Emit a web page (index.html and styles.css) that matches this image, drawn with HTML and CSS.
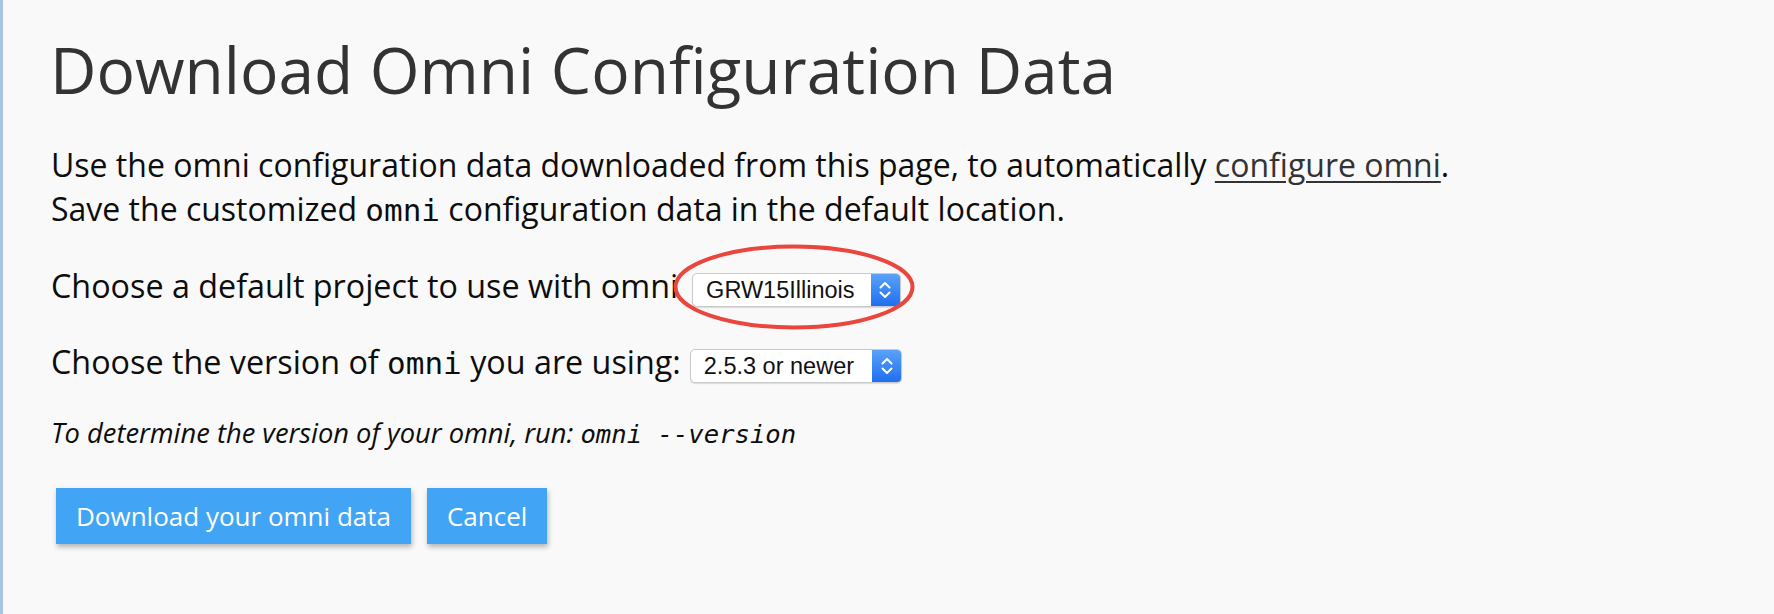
FILE: index.html
```html
<!DOCTYPE html>
<html lang="en">
<head>
<meta charset="utf-8">
<title>Download Omni Configuration Data</title>
<link rel="stylesheet" href="styles.css">
</head>
<body>
<div class="page">
  <main class="content">
    <h1 class="title">Download Omni Configuration Data</h1>
    <p class="intro">Use the omni configuration data downloaded from this page, to automatically <a class="link" href="#">configure omni</a>.<br>Save the customized <code class="code">omni</code> configuration data in the default location.</p>

    <div class="field field-project">
      <span class="label">Choose a default project to use with omni</span>
      <span class="select-wrap">
        <span class="select select-project">
          <span class="select-value">GRW15Illinois</span>
          <span class="select-cap">
            <svg class="chevrons" viewBox="0 0 14 22" width="14" height="22"><path d="M2.5 8.5 L7 4 L11.5 8.5 M2.5 13.5 L7 18 L11.5 13.5" fill="none" stroke="#fff" stroke-width="2" stroke-linecap="round" stroke-linejoin="round"/></svg>
          </span>
        </span>
        <svg class="highlight" viewBox="0 0 242 86" width="242" height="86"><ellipse cx="121" cy="43" rx="118.5" ry="40.5" fill="none" stroke="#e9463d" stroke-width="4"/></svg>
      </span>
    </div>

    <div class="field field-version">
      <span class="label">Choose the version of <code class="code">omni</code> you are using:</span>
      <span class="select select-version">
        <span class="select-value">2.5.3 or newer</span>
        <span class="select-cap">
          <svg class="chevrons" viewBox="0 0 14 22" width="14" height="22"><path d="M2.5 8.5 L7 4 L11.5 8.5 M2.5 13.5 L7 18 L11.5 13.5" fill="none" stroke="#fff" stroke-width="2" stroke-linecap="round" stroke-linejoin="round"/></svg>
        </span>
      </span>
    </div>

    <p class="hint">To determine the version of your omni, run: <code class="code code-hint">omni --version</code></p>

    <div class="actions">
      <button class="btn" type="button">Download your omni data</button>
      <button class="btn" type="button">Cancel</button>
    </div>
  </main>
</div>
</body>
</html>
```
FILE: styles.css
```css
html, body {
  margin: 0;
  padding: 0;
  background: #f9f9f9;
}

.page {
  min-height: 614px;
  border-left: 3px solid #a7c4e2;
  box-sizing: border-box;
}

.content {
  padding: 30px 0 0 48px;
  font-family: "Open Sans", "Liberation Sans", sans-serif;
  color: #0d0d0d;
}

.title {
  margin: 0 0 0 -1px;
  font-size: 64px;
  line-height: 80px;
  font-weight: 400;
  color: #333;
}

.intro {
  margin: 33px 0 0 0;
  font-size: 32px;
  line-height: 44px;
}

.link {
  color: #333;
  text-decoration: underline;
  text-underline-offset: 4px;
  text-decoration-thickness: 2px;
}

.code {
  font-family: "DejaVu Sans Mono", "Liberation Mono", monospace;
  font-size: 31px;
}

.field {
  display: flex;
  align-items: baseline;
  gap: 14px;
  font-size: 32.3px;
  line-height: 44px;
}

.field-project {
  margin-top: 31px;
}

.field-version {
  margin-top: 32px;
  gap: 9px;
}

.select-wrap {
  position: relative;
  display: inline-flex;
}

.select {
  display: inline-flex;
  align-items: stretch;
  height: 34px;
  box-sizing: border-box;
  background: #fff;
  border: 1px solid #c9c9c9;
  border-radius: 5px;
  box-shadow: 0 1px 1px rgba(0, 0, 0, 0.12);
  font-family: "Liberation Sans", Arial, sans-serif;
  font-size: 23.5px;
  color: #111;
  overflow: hidden;
}

.select-value {
  line-height: 32px;
  padding: 0 16px 0 13px;
}

.select-version .select-value {
  padding-right: 18px;
}

.select-cap {
  width: 29px;
  display: flex;
  align-items: center;
  justify-content: center;
  background: linear-gradient(#5aa2f8, #1f6fef);
}

.highlight {
  position: absolute;
  left: -19px;
  top: -29px;
  pointer-events: none;
}

.hint {
  margin: 28px 0 0 0;
  font-size: 27.3px;
  line-height: 40px;
  font-style: italic;
  color: #0d0d0d;
}

.code-hint {
  white-space: pre;
  font-style: italic;
  font-size: 25.6px;
}

.actions {
  display: flex;
  gap: 16px;
  margin: 34px 0 0 5px;
}

.btn {
  height: 56px;
  padding: 0 20px;
  border: none;
  border-radius: 0;
  background: #42a4f5;
  color: #fff;
  font-family: "Open Sans", "Liberation Sans", sans-serif;
  font-size: 26px;
  box-shadow: 1px 3px 5px rgba(0, 0, 0, 0.28);
  cursor: pointer;
}
```
